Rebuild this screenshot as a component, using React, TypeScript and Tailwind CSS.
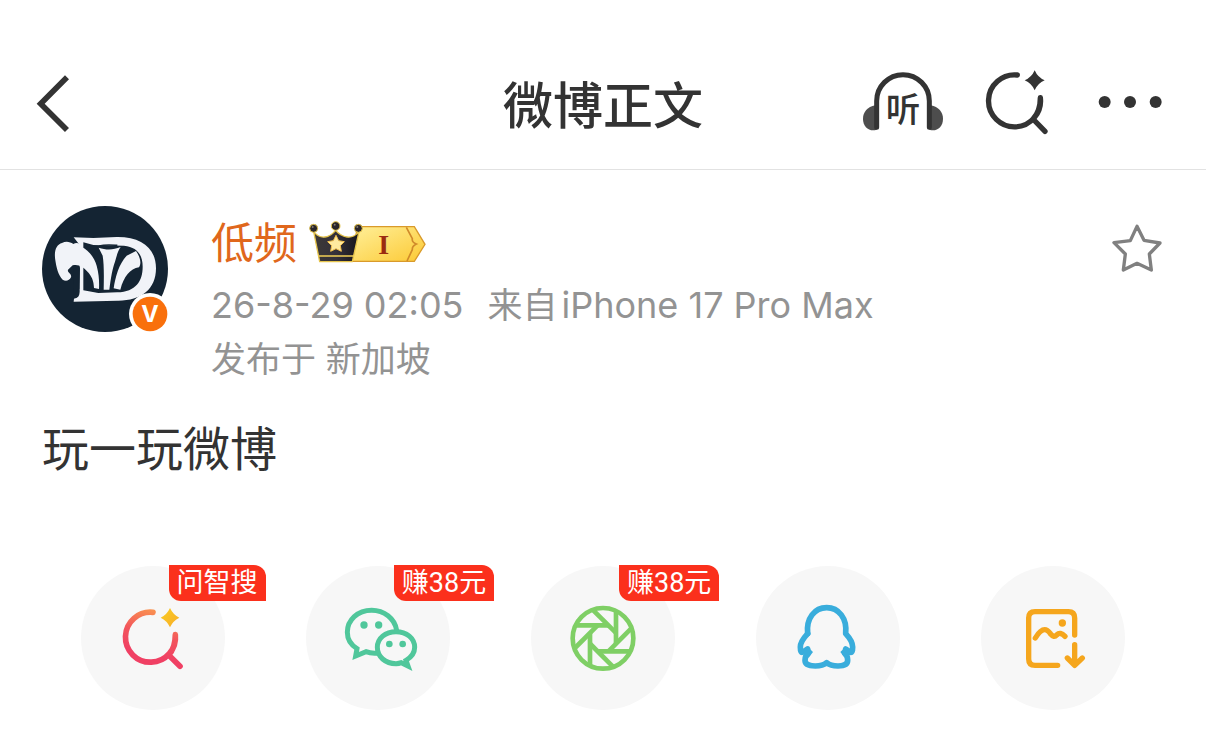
import { FC, ReactNode } from "react";

type ShareItem = {
  label: string;
  badge?: string;
  icon: ReactNode;
};

const BackIcon: FC = () => (
  <svg viewBox="48 72 102 174" className="h-[58px] w-[34px]" fill="none" stroke="#333" strokeWidth="17">
    <path d="M141 79 L62 158 L141 237" />
  </svg>
);

const ListenIcon: FC = () => (
  <svg viewBox="36 45 240 204" className="h-[68px] w-20 overflow-visible">
    <path d="M76 151 C52 155 39 172 39 191 C39 212 52 226 70 226 C81 226 87 219 87 210 V151Z" fill="#4d4d4d" />
    <path d="M242 151 C266 155 279 172 279 191 C279 212 266 226 248 226 C237 226 231 219 231 210 V151Z" fill="#4d4d4d" />
    <path d="M80 217 V138 A79 79 0 0 1 238 138 V217" fill="none" stroke="#333" strokeWidth="15" strokeLinecap="round" />
    <text x="159" y="201" textAnchor="middle" fontSize="104" fontWeight="500" fill="#333">听</text>
  </svg>
);

const SearchIcon: FC = () => (
  <svg viewBox="396 45 228 204" className="h-[68px] w-[76px]">
    <path
      d="M502 60 A78 78 0 1 0 571 128 C571 156 564 176 549 192 L585 229"
      fill="none"
      stroke="#333"
      strokeWidth="16"
      strokeLinecap="round"
      strokeLinejoin="round"
    />
    <path d="M554 46 Q563 67 584 76 Q563 85 554 106 Q545 85 524 76 Q545 67 554 46Z" fill="#333" />
  </svg>
);

const MoreIcon: FC = () => (
  <svg viewBox="744 45 216 204" className="h-[68px] w-[72px]" fill="#333">
    <circle cx="764" cy="141" r="18" />
    <circle cx="840" cy="141" r="18" />
    <circle cx="917" cy="141" r="18" />
  </svg>
);

const Avatar: FC = () => (
  <svg viewBox="36 33 378 378" className="size-[126px] shrink-0 overflow-visible" role="img" aria-label="低频">
    <circle cx="225" cy="222" r="189" fill="#142433" />
    <g fill="#f1f3f8">
      {/* D */}
      <path
        fillRule="evenodd"
        d="M131 127 L190 129 L260 126 C335 125 378 160 378 220 C378 284 332 318 262 317 L131 320 L132 311 C144 308 148 304 149 290 L149 150 Z M160 142 L160 286 L205 294 L262 292 C318 290 338 258 338 215 C338 180 322 156 282 152 L190 150 Z"
      />
      <path d="M132 200 L150 218 L148 280 L130 300Z" fill="#142433" />
      {/* leaves */}
      <path d="M76 196 C71 166 80 148 96 144 C108 137 120 140 130 147 C141 140 152 146 154 155 C177 166 193 188 200 212 C207 238 208 260 207 282 L192 279 C191 258 186 244 171 229 C160 214 144 207 128 211 L114 224 C111 235 126 234 123 247 C118 258 106 260 98 254 C84 240 79 216 76 196Z" />
      <path d="M206 158 C230 166 250 165 272 156 C263 168 260 184 255 200 C247 222 243 246 238 284 L221 284 C222 240 222 206 218 182Z" />
      <path d="M290 182 L318 168 C331 186 335 206 327 217 C300 221 282 244 271 284 L251 280 C256 246 267 206 290 182Z" />
    </g>
    <path d="M208 153 C225 148 245 150 262 151" stroke="#142433" strokeWidth="5" fill="none" />
    {/* verified */}
    <circle cx="360" cy="357" r="63" fill="#fff" />
    <circle cx="360" cy="357" r="52" fill="#f9700c" />
    <text x="360" y="382" textAnchor="middle" fontSize="70" fontWeight="700" fill="#fff" className="font-['Inter',sans-serif]">V</text>
  </svg>
);

const VipBadge: FC = () => (
  <svg viewBox="328 44 354 126" className="h-[42px] w-[118px]">
    <defs>
      <linearGradient id="gold" x1="0" y1="0" x2="1" y2="1">
        <stop offset="0" stopColor="#fff09a" />
        <stop offset="1" stopColor="#fcc934" />
      </linearGradient>
      <linearGradient id="crown" x1="0" y1="0" x2="1" y2="0">
        <stop offset="0" stopColor="#3d3936" />
        <stop offset="0.5" stopColor="#34303a" />
        <stop offset="1" stopColor="#17151b" />
      </linearGradient>
    </defs>
    <path d="M474 61 H644 L676 114 L644 165 H452Z" fill="url(#gold)" stroke="#d99a2b" strokeWidth="4" />
    <path d="M620 63 L638 97 Q636 108 650 113 Q637 119 638 130 L622 164" fill="none" stroke="#d08a2a" strokeWidth="5" />
    <text x="552" y="143" textAnchor="middle" fontSize="84" fontWeight="700" fill="#9b2b10" className="font-['Liberation_Serif',serif]">I</text>
    <path
      d="M342 76 C352 88 364 94 376 92 C390 90 400 82 408 72 C416 82 428 90 442 92 C456 94 468 88 478 76 L458 166 H360Z"
      fill="url(#crown)"
      stroke="#e5c44c"
      strokeWidth="4"
      strokeLinejoin="round"
    />
    <path d="M358 149 H462" stroke="#f2cf56" strokeWidth="5" />
    <g fill="#29252a" stroke="#e5c44c" strokeWidth="3">
      <circle cx="342" cy="66" r="12" />
      <circle cx="408" cy="59" r="13" />
      <circle cx="476" cy="66" r="12" />
    </g>
    <g fill="#817a70">
      <circle cx="339" cy="62" r="3" />
      <circle cx="405" cy="55" r="3" />
      <circle cx="473" cy="62" r="3" />
    </g>
    <path
      d="M409 87 L417 103 L434 106 L422 118 L425 135 L409 127 L393 135 L396 118 L384 106 L401 103Z"
      fill="#ffeaa0"
      stroke="#f3c04d"
      strokeWidth="3"
      strokeLinejoin="round"
    />
  </svg>
);

const StarIcon: FC = () => (
  <svg viewBox="36 42 150 150" className="size-[50px]" fill="none" stroke="#808080" strokeWidth="10" strokeLinejoin="round">
    <path d="M111 49 L132 91 L180 99 L148 132 L154 180 L111 160 L70 180 L76 132 L42 98 L91 92Z" />
  </svg>
);

const iconBox = "size-full";

const items: ShareItem[] = [
  {
    label: "问智搜",
    badge: "问智搜",
    icon: (
      <svg viewBox="33 33 432 432" className={iconBox}>
        <defs>
          <linearGradient id="ask" gradientUnits="userSpaceOnUse" x1="270" y1="165" x2="235" y2="300">
            <stop offset="0" stopColor="#fa9550" />
            <stop offset="0.55" stopColor="#f2545c" />
            <stop offset="1" stopColor="#f04064" />
          </linearGradient>
          <linearGradient id="spark" x1="0" y1="0" x2="1" y2="1">
            <stop offset="0" stopColor="#f8ce24" />
            <stop offset="1" stopColor="#f9ac28" />
          </linearGradient>
        </defs>
        <path
          d="M249 172 A75 75 0 1 0 316 239 C316 266 309 286 296 300 L330 334"
          fill="none"
          stroke="url(#ask)"
          strokeWidth="17"
          strokeLinecap="round"
          strokeLinejoin="round"
        />
        <path d="M300 159 Q309 179 328 188 Q309 197 300 217 Q291 197 272 188 Q291 179 300 159Z" fill="url(#spark)" />
      </svg>
    ),
  },
  {
    label: "微信",
    badge: "赚38元",
    icon: (
      <svg viewBox="18 33 432 432" className={iconBox}>
        <g fill="none" stroke="#50c79b" strokeWidth="15">
          <path d="M290 226 C284 190 252 166 215 166 C173 166 142 195 142 232 C142 254 153 270 171 281 L167 303 L198 290 C210 295 220 296 236 294" />
          <path d="M318 316 C334 307 344 294 344 277 C344 250 320 230 288 230 C256 230 232 250 232 277 C232 305 256 326 288 326 C294 326 299 325 304 323 L324 333Z" />
        </g>
        <g fill="#50c79b">
          <circle cx="192" cy="210" r="11" />
          <circle cx="236" cy="210" r="11" />
          <circle cx="268" cy="267" r="10" />
          <circle cx="308" cy="267" r="10" />
        </g>
      </svg>
    ),
  },
  {
    label: "朋友圈",
    badge: "赚38元",
    icon: (
      <svg viewBox="18 33 432 432" className={iconBox} fill="none" stroke="#7fcf65" strokeWidth="14">
        <circle cx="234" cy="250" r="91" />
        {[0, 45, 90, 135, 180, 225, 270, 315].map((deg) => (
          <path key={deg} d="M154 211 H250" transform={`rotate(${deg} 234 250)`} />
        ))}
      </svg>
    ),
  },
  {
    label: "QQ",
    icon: (
      <svg viewBox="18 33 432 432" className={iconBox}>
        <g fill="none" stroke="#39addc" strokeWidth="17" strokeLinecap="round" strokeLinejoin="round">
          <path d="M173 236 C168 190 194 158 230 158 C266 158 292 190 287 236 C300 250 308 264 308 276 C308 288 306 292 303 292 C298 292 291 284 287 282" />
          <path d="M173 236 C160 250 151 264 151 276 C151 288 153 292 156 292 C161 292 168 284 173 282" />
          <path d="M174 296 C167 301 165 308 165 316 C165 328 178 333 196 333 C212 333 222 330 230 323 C238 330 248 333 264 333 C282 333 293 328 293 316 C293 308 292 301 285 296" />
        </g>
        <path d="M173 275 L189 291 L176 308 L158 296Z M287 275 L271 291 L284 308 L302 296Z" fill="#39addc" />
      </svg>
    ),
  },
  {
    label: "保存图片",
    icon: (
      <svg viewBox="18 33 432 432" className={iconBox}>
        <g fill="none" stroke="#f5a61d" strokeWidth="16" strokeLinecap="round" strokeLinejoin="round">
          <path d="M248 331 H180 Q161 331 161 312 V189 Q161 170 180 170 H280 Q299 170 299 189 V240" />
          <path d="M181 249 Q196 224 209 224 Q217 224 227 237 Q237 249 245 240 Q256 229 270 244" />
          <path d="M299 269 V330 M277 309 L299 331 L322 309" />
        </g>
        <circle cx="262" cy="204" r="11" fill="#f5a61d" />
      </svg>
    ),
  },
];

const Header: FC = () => (
  <header className="grid h-[170px] grid-cols-[1fr_auto_1fr] items-center border-b border-[#e2e2e2] px-9 pt-[38px]">
    <button type="button" aria-label="返回" className="justify-self-start">
      <BackIcon />
    </button>
    <h1 className="pt-1 text-[50px] leading-none font-medium text-[#333]">微博正文</h1>
    <div className="flex items-center gap-10 justify-self-end">
      <button type="button" aria-label="听">
        <ListenIcon />
      </button>
      <button type="button" aria-label="搜索">
        <SearchIcon />
      </button>
      <button type="button" aria-label="更多">
        <MoreIcon />
      </button>
    </div>
  </header>
);

const Author: FC = () => (
  <section className="flex items-start pt-9 pr-11 pl-[42px]">
    <Avatar />
    <div className="ml-[43px] flex-1">
      <div className="flex h-[72px] items-center gap-3">
        <a href="#" className="pt-0.5 text-[43px] leading-none text-[#e0671c]">低频</a>
        <VipBadge />
      </div>
      <div className="text-[35px] leading-[54px] text-[#939393]">
        <p className="flex gap-6">
          <time className="text-[36px]">26-8-29 02:05</time>
          <span className="flex gap-1">
            来自<span className="text-[36px]">iPhone 17 Pro Max</span>
          </span>
        </p>
        <p>发布于 新加坡</p>
      </div>
    </div>
    <button type="button" aria-label="收藏" className="mt-[18px]">
      <StarIcon />
    </button>
  </section>
);

const App: FC = () => {
  return (
    <div className="min-h-screen bg-white font-['Inter','Noto_Sans_CJK_SC',sans-serif]">
      <Header />
      <main>
        <Author />
        <p className="px-[42px] pt-7 text-[47px] leading-[70px] text-[#333]">玩一玩微博</p>
        {/* share */}
        <ul className="grid grid-cols-5 px-10 pt-[82px] pb-5">
          {items.map((item) => (
            <li key={item.label} className="flex justify-center">
              <button type="button" aria-label={item.label} className="relative size-36 rounded-full bg-[#f7f7f7]">
                {item.icon}
                {item.badge && (
                  <span className="absolute -top-px left-[88px] rounded-tr-xl rounded-bl-xl bg-[#fb301c] px-2 font-['Roboto','Noto_Sans_CJK_SC',sans-serif] text-[27px] leading-9 whitespace-nowrap text-white">
                    {item.badge}
                  </span>
                )}
              </button>
            </li>
          ))}
        </ul>
      </main>
    </div>
  );
};

export default App;
